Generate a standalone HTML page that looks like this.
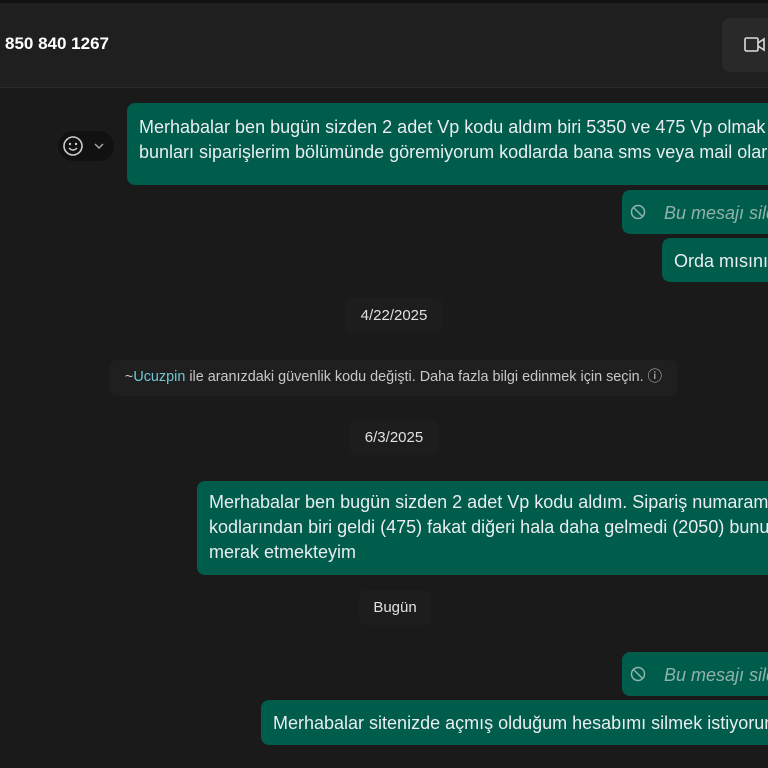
<!DOCTYPE html><html><head><style>
body{margin:0;width:768px;height:768px;overflow:hidden;background:#1a1a1a;font-family:"Liberation Sans",sans-serif;position:relative}
.a{position:absolute;box-sizing:border-box}
.hd{left:0;top:0;width:768px;height:88px;background:#1f1f1f;border-top:3px solid #111;border-bottom:1px solid #2a2a2a}
.b{background:#005c4b;color:#e9edef;border-radius:8px;font-size:18px;line-height:25px;padding:11px 12px;white-space:nowrap;overflow:hidden}
.p{background:#1d1d1d;color:#e1e1e1;border-radius:7px;font-size:15px;text-align:center;line-height:35px}
.del{color:#8fb3ab;font-style:italic}
</style></head><body>
<div class="a hd"></div>
<div class="a" style="left:5px;top:34px;color:#fff;font-weight:bold;font-size:17px">850 840 1267</div>
<div class="a" style="left:722px;top:18px;width:60px;height:54px;background:#292929;border-radius:8px"></div>
<svg class="a" style="left:744px;top:37px" width="24" height="16" viewBox="0 0 24 16"><rect x="1" y="1" width="13" height="13" rx="1.5" fill="none" stroke="#ddd" stroke-width="1.6"/><path d="M14 6 L20 2 V13 L14 9" fill="none" stroke="#ddd" stroke-width="1.6"/></svg>
<div class="a" style="left:58px;top:131px;width:56px;height:30px;background:#111;border-radius:15px"></div>
<svg class="a" style="left:62px;top:135px" width="48" height="22" viewBox="0 0 48 22"><circle cx="11" cy="11" r="9" fill="none" stroke="#ccc" stroke-width="1.6"/><circle cx="8" cy="9" r="1.2" fill="#ccc"/><circle cx="14" cy="9" r="1.2" fill="#ccc"/><path d="M7 13 Q11 17 15 13" fill="none" stroke="#ccc" stroke-width="1.4"/><path d="M33 9 L37 13 L41 9" fill="none" stroke="#aaa" stroke-width="1.4"/></svg>
<div class="a b" style="left:127px;top:103px;width:660px;height:82px;padding-top:12px">Merhabalar ben bugün sizden 2 adet Vp kodu aldım biri 5350 ve 475 Vp olmak üzere<br>bunları siparişlerim bölümünde göremiyorum kodlarda bana sms veya mail olarak</div>
<div class="a b" style="left:622px;top:190px;width:160px;height:44px"><span class="del">&nbsp;&nbsp;&nbsp;&nbsp;&nbsp;&nbsp;Bu mesajı sildiniz</span></div>
<svg class="a" style="left:630px;top:204px" width="16" height="16" viewBox="0 0 16 16"><circle cx="8" cy="8" r="6.5" fill="none" stroke="#8fb3ab" stroke-width="1.5"/><path d="M3.5 3.5 L12.5 12.5" stroke="#8fb3ab" stroke-width="1.5"/></svg>
<div class="a b" style="left:662px;top:238px;width:120px;height:44px">Orda mısınız</div>
<div class="a p" style="left:345px;top:298px;width:98px;height:35px">4/22/2025</div>
<div class="a p" style="left:110px;top:360px;width:567px;height:36px;font-size:14.4px;color:#c8c8c8;background:#1f1f1f">~<span style="color:#6fc7d6">Ucuzpin</span> ile aranızdaki güvenlik kodu değişti. Daha fazla bilgi edinmek için seçin. ⓘ</div>
<div class="a p" style="left:349px;top:420px;width:90px;height:35px">6/3/2025</div>
<div class="a b" style="left:197px;top:481px;width:590px;height:94px;padding-top:9px">Merhabalar ben bugün sizden 2 adet Vp kodu aldım. Sipariş numaram<br>kodlarından biri geldi (475) fakat diğeri hala daha gelmedi (2050) bunu<br>merak etmekteyim</div>
<div class="a p" style="left:359px;top:590px;width:72px;height:35px">Bugün</div>
<div class="a b" style="left:622px;top:652px;width:160px;height:44px"><span class="del">&nbsp;&nbsp;&nbsp;&nbsp;&nbsp;&nbsp;Bu mesajı sildiniz</span></div>
<svg class="a" style="left:630px;top:666px" width="16" height="16" viewBox="0 0 16 16"><circle cx="8" cy="8" r="6.5" fill="none" stroke="#8fb3ab" stroke-width="1.5"/><path d="M3.5 3.5 L12.5 12.5" stroke="#8fb3ab" stroke-width="1.5"/></svg>
<div class="a b" style="left:261px;top:700px;width:520px;height:45px">Merhabalar sitenizde açmış olduğum hesabımı silmek istiyorum</div>
</body></html>
